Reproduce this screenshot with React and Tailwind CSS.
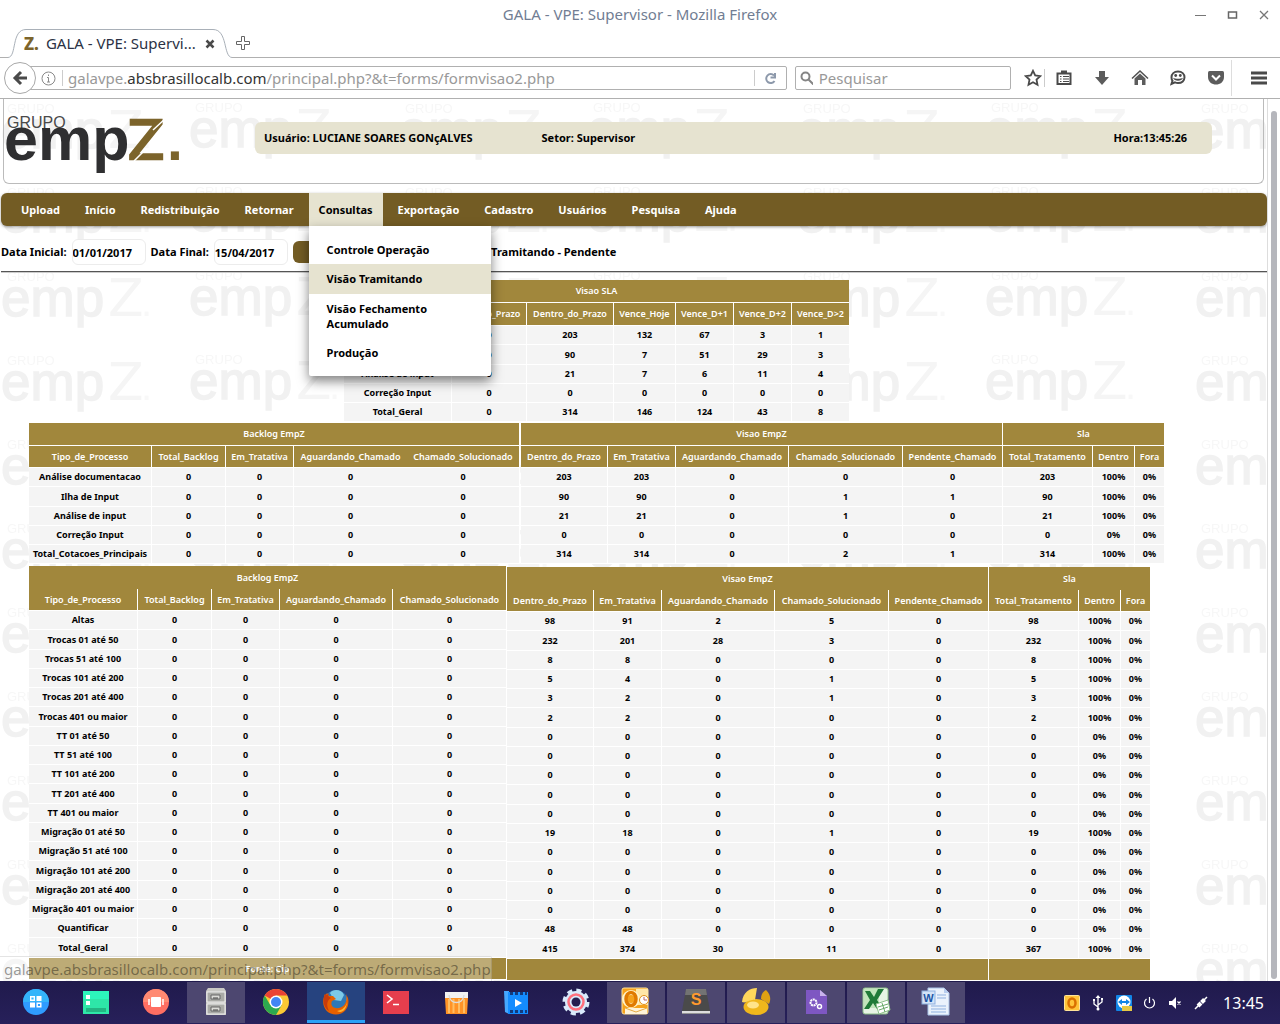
import React from "react";

const HEAD = "border-white bg-[#a1873c] text-white";

const LEFT_COLUMNS = ["Tipo_de_Processo", "Total_Backlog", "Em_Tratativa", "Aguardando_Chamado", "Chamado_Solucionado"];
const RIGHT_COLUMNS = [
  "Dentro_do_Prazo",
  "Em_Tratativa",
  "Aguardando_Chamado",
  "Chamado_Solucionado",
  "Pendente_Chamado",
  "Total_Tratamento",
  "Dentro",
  "Fora",
];
const RIGHT_WIDTHS = ["w-[87px]", "w-[68px]", "w-[113px]", "w-[114px]", "w-[100px]", "w-[90px]", "w-[42px]", "w-[29px]"];
const RIGHT_GROUPS = [
  { label: "Visao EmpZ", span: 5 },
  { label: "Sla", span: 3 },
];

const SLA_ROWS = [
  ["Análise documentacao", 0, 203, 132, 67, 3, 1],
  ["Ilha de Input", 0, 90, 7, 51, 29, 3],
  ["Análise de input", 0, 21, 7, 6, 11, 4],
  ["Correção Input", 0, 0, 0, 0, 0, 0],
  ["Total_Geral", 0, 314, 146, 124, 43, 8],
];

const MAIN_NAMES = ["Análise documentacao", "Ilha de Input", "Análise de input", "Correção Input", "Total_Cotacoes_Principais"];
const MAIN_ROWS = [
  [203, 203, 0, 0, 0, 203, "100%", "0%"],
  [90, 90, 0, 1, 1, 90, "100%", "0%"],
  [21, 21, 0, 1, 0, 21, "100%", "0%"],
  [0, 0, 0, 0, 0, 0, "0%", "0%"],
  [314, 314, 0, 2, 1, 314, "100%", "0%"],
];

const OTHER_NAMES = [
  "Altas",
  "Trocas 01 até 50",
  "Trocas 51 até 100",
  "Trocas 101 até 200",
  "Trocas 201 até 400",
  "Trocas 401 ou maior",
  "TT 01 até 50",
  "TT 51 até 100",
  "TT 101 até 200",
  "TT 201 até 400",
  "TT 401 ou maior",
  "Migração 01 até 50",
  "Migração 51 até 100",
  "Migração 101 até 200",
  "Migração 201 até 400",
  "Migração 401 ou maior",
  "Quantificar",
  "Total_Geral",
];
const EMPTY = [0, 0, 0, 0, 0, 0, "0%", "0%"];
const OTHER_ROWS = [
  [98, 91, 2, 5, 0, 98, "100%", "0%"],
  [232, 201, 28, 3, 0, 232, "100%", "0%"],
  [8, 8, 0, 0, 0, 8, "100%", "0%"],
  [5, 4, 0, 1, 0, 5, "100%", "0%"],
  [3, 2, 0, 1, 0, 3, "100%", "0%"],
  [2, 2, 0, 0, 0, 2, "100%", "0%"],
  EMPTY,
  EMPTY,
  EMPTY,
  EMPTY,
  EMPTY,
  [19, 18, 0, 1, 0, 19, "100%", "0%"],
  EMPTY,
  EMPTY,
  EMPTY,
  EMPTY,
  [48, 48, 0, 0, 0, 0, "0%", "0%"],
  [415, 374, 30, 11, 0, 367, "100%", "0%"],
];

const backlog = (names) => names.map((name) => [name, 0, 0, 0, 0]);

function DataTable({ groups, columns, widths, rows, footer, ruled = true, openRight = false, endBorder = false, headHeight = "h-[22px]" }) {
  const line = (i, count) => (i < count - 1 || endBorder ? " border-r" : "");
  return (
    <table className="table-fixed border-separate border-spacing-0 text-center text-[9px] leading-[12px] font-bold whitespace-nowrap text-black">
      <colgroup>
        {widths.map((w, i) => (
          <col key={i} className={w} />
        ))}
      </colgroup>
      <thead>
        <tr className="h-[23px]">
          {groups.map((g, i) => (
            <th key={i} colSpan={g.span} className={HEAD + " p-0 font-semibold" + (ruled ? " border-b" : "") + line(i, groups.length)}>
              {g.label}
            </th>
          ))}
        </tr>
        <tr className={headHeight}>
          {columns.map((c, i) => (
            <th
              key={c}
              className={HEAD + " border-b p-0 font-semibold" + (openRight && i === columns.length - 2 ? "" : line(i, columns.length))}
            >
              {c}
            </th>
          ))}
        </tr>
      </thead>
      <tbody>
        {rows.map((row, r) => (
          <tr key={r} className="h-[19px] nth-[4n+2]:h-[20px]">
            {row.map((cell, i) => (
              <td
                key={i}
                className={
                  "border-b border-white bg-[#f4f4f4] p-0" +
                  (openRight && i === row.length - 2 ? "" : line(i, row.length))
                }
              >
                {cell}
              </td>
            ))}
          </tr>
        ))}
      </tbody>
      {footer && (
        <tfoot>
          <tr className="h-[22px]">
            {footer.map((f, i) => (
              <td key={i} colSpan={f.span} className={HEAD + " border-b p-0 font-semibold" + line(i, footer.length)}>
                {f.label}
              </td>
            ))}
          </tr>
        </tfoot>
      )}
    </table>
  );
}

function Watermark() {
  return (
    <svg className="absolute inset-0 h-full w-full font-normal" aria-hidden="true">
      <defs>
        <g id="mark" fill="#f1f1f1" fontFamily="Liberation Sans, sans-serif">
          <text x="6" y="11" fontSize="13" fill="#f7f7f7">GRUPO</text>
          <text x="0" y="46" fontSize="53" stroke="#f1f1f1" strokeWidth="1.500">emp</text>
          <text x="107" y="46" fontSize="52" fontFamily="DejaVu Sans, sans-serif" fill="#f5f5f5">Z</text>
          <text x="140" y="46" fontSize="40" fill="#f8f8f8">.</text>
        </g>
        <pattern id="marks" width="398" height="84" patternUnits="userSpaceOnUse" y="-9">
          <use href="#mark" x="1" y="12" />
          <use href="#mark" x="189" y="11" />
        </pattern>
      </defs>
      <rect width="100%" height="100%" fill="url(#marks)" />
    </svg>
  );
}

function Logo() {
  return (
    <svg width="186" height="78" viewBox="0 -8 186 78" className="font-normal" role="img" aria-label="Grupo empZ">
      <g fontFamily="Liberation Sans, sans-serif">
        <text x="3" y="17" fontSize="16" fill="#4a4a4a">GRUPO</text>
        <text x="0" y="49" fontSize="61" fontWeight="700" fill="#2f2f31">emp</text>
        <text x="124" y="48" fontSize="53" fontFamily="DejaVu Sans, sans-serif" fill="#7c642b" stroke="#7c642b" strokeWidth="2.500">Z</text>
        <text x="163" y="49" fontSize="57" fontWeight="700" fill="#7c642b">.</text>
      </g>
      <path d="M149 19l13-12M130 50l11-11" stroke="#fff" strokeWidth="1.500" />
    </svg>
  );
}

function TabStrip() {
  return (
    <div className="flex h-[29px] items-stretch">
      <div className="w-2 border-b border-[#b0b0b0]" />
      <div className="relative flex w-[224px] items-center pl-4">
        <svg className="absolute top-0 left-0" width="224" height="29" fill="none">
          <path d="M0 28.500C9 28 3 .5 18 .5H205C220 .5 215 28 224 28.500" stroke="#a9b0b8" />
        </svg>
        <span className="text-[17px] leading-none font-extrabold text-[#7c642b]">Z.</span>
        <span className="ml-[7px] text-[15px] text-[#2b3245]">GALA - VPE: Supervi...</span>
        <button aria-label="Fechar aba" className="mr-[17px] ml-auto">
          <svg width="10" height="10" stroke="#4a4a4a" strokeWidth="2.500"><path d="M1.500 1.500l7 7M8.500 1.500l-7 7" /></svg>
        </button>
      </div>
      <div className="flex flex-1 items-center border-b border-[#b0b0b0] pl-1">
        <button aria-label="Nova aba">
          <svg width="15" height="15" fill="#fff" stroke="#666"><path d="M5.500 .5h3v5h5v3h-5v5h-3v-5h-5v-3h5z" /></svg>
        </button>
      </div>
    </div>
  );
}

function ToolButton({ label, children }) {
  return (
    <button aria-label={label} className="flex w-[38px] justify-center">
      <svg width="18" height="18" viewBox="0 0 18 18" fill="none">{children}</svg>
    </button>
  );
}

function Toolbar() {
  return (
    <div className="flex h-[41px] items-center border-b border-[#b0b0b0] pl-1">
      <button aria-label="Voltar" className="relative flex size-8 items-center justify-center rounded-full border border-[#a8a8a8] bg-white">
        <svg width="16" height="16" fill="none" stroke="#4a4a4a" strokeWidth="3"><path d="M15 8H3M9 2L3 8l6 6" /></svg>
      </button>
      <div className="-ml-2 flex h-6 flex-1 items-center rounded-r-xs border border-[#b0b0b0] pl-3">
        <svg width="15" height="15" fill="none" stroke="#8a8a8a"><circle cx="7.500" cy="7.500" r="6.500" /><path d="M7.500 6.500V11M6 11h3M6 6.500h1.500M7.500 3.500v1.500" /></svg>
        <span className="ml-1.5 h-4 w-px bg-[#ccc]" />
        <div role="textbox" aria-label="Endereço" className="ml-[5px] flex-1 text-[15px] leading-5 whitespace-nowrap text-[#999]">
          galavpe.<span className="text-[#333]">absbrasillocalb.com</span>/principal.php?&amp;t=forms/formvisao2.php
        </div>
        <button aria-label="Recarregar" className="flex h-4 w-8 items-center justify-center border-l border-[#ccc]">
          <svg width="13" height="13" fill="none" stroke="#8d99ab" strokeWidth="2"><path d="M10 3.500A4.500 4.500 0 1 0 10.500 9M6.500 5.500H11V1" /></svg>
        </button>
      </div>
      <label className="ml-2 flex h-6 w-[216px] items-center rounded-xs border border-[#b0b0b0] pl-1">
        <svg width="14" height="14" fill="none" stroke="#858585" strokeWidth="2"><circle cx="5.500" cy="5.500" r="4" /><path d="M8.500 8.500l5 5" /></svg>
        <input aria-label="Pesquisar" placeholder="Pesquisar" className="ml-1.5 w-full text-[15px] leading-5 outline-none placeholder:text-[#999]" />
      </label>
      <div className="ml-[13px] flex w-5">
        <button aria-label="Favoritos">
          <svg width="18" height="18" fill="none" stroke="#4a4a4a" strokeWidth="1.800"><path d="M9 1.800l2.200 4.700 5 .6-3.700 3.500 1 5.100L9 13.200l-4.500 2.500 1-5.100L1.800 7.100l5-.6z" /></svg>
        </button>
      </div>
      <span className="h-[18px] w-px bg-[#ccc]" />
      <ToolButton label="Lista">
        <path d="M2.500 4.500h13v10.500h-13z" stroke="#4a4a4a" strokeWidth="2" />
        <path d="M6 1.500h6v3H6z" fill="#4a4a4a" />
        <path d="M5 7.500h1.500M5 10h1.500M5 12.500h1.500M8 7.500h6M8 10h6M8 12.500h6" stroke="#4a4a4a" />
      </ToolButton>
      <ToolButton label="Downloads">
        <path d="M6 2h6v6h4l-7 8-7-8h4z" fill="#5c5c5c" />
      </ToolButton>
      <ToolButton label="Início">
        <path d="M1 9.500l8-7.500 8 7.500" stroke="#4f4f4f" strokeWidth="1.500" />
        <path d="M3.500 9.500L9 4.500l5.500 5V16H11v-5H7v5H3.500z" fill="#5c5c5c" />
      </ToolButton>
      <ToolButton label="Conversa">
        <path d="M9 2.500c4 0 6.500 2.500 6.500 5.800S13 14 9 14c-1 0-2-.2-3-.6L2.500 15l1-3.200C2.500 10.800 2.500 9.500 2.500 8.300 2.500 5 5 2.500 9 2.500z" stroke="#4a4a4a" strokeWidth="2" />
        <path d="M4 8.800c2.500 1.400 7.500 1.400 10 0-1 4-9 4-10 0" fill="#4a4a4a" />
        <circle cx="6.700" cy="6.500" r="1.400" fill="#4a4a4a" /><circle cx="11.300" cy="6.500" r="1.400" fill="#4a4a4a" />
      </ToolButton>
      <ToolButton label="Pocket">
        <path d="M1 3.500Q1 2 2.500 2h13Q17 2 17 3.500V8c0 10-16 10-16 0z" fill="#5c5c5c" />
        <path d="M5 6.500l4 4 4-4" stroke="#fff" strokeWidth="2" />
      </ToolButton>
      <span className="-ml-1 h-9 w-px bg-[#ddd]" />
      <button aria-label="Menu" className="mr-[13px] ml-[19px]">
        <svg width="16" height="14" stroke="#4a4a4a" strokeWidth="3"><path d="M0 2h16M0 7h16M0 12h16" /></svg>
      </button>
    </div>
  );
}

const CONSULTAS = ["Controle Operação", "Visão Tramitando", "Visão Fechamento Acumulado", "Produção"];
const MENU = ["Upload", "Início", "Redistribuição", "Retornar", "Consultas", "Exportação", "Cadastro", "Usuários", "Pesquisa", "Ajuda"];

function Nav() {
  return (
    <nav className="relative z-10 mt-[9px] ml-px rounded-md bg-[#735c24] pl-2.5 shadow-[0_1px_3px_rgba(0,0,0,0.4)]">
      <ul className="flex gap-[5px]">
        {MENU.map((item) =>
          item === "Consultas" ? (
            <li key={item} className="relative">
              <a href="#consultas" className="block bg-[#e6e3d0] px-2.5 leading-[33px] text-black">{item}</a>
              <ul className="absolute top-full left-0 w-[182px] rounded-b-xs bg-white py-[9px] leading-[15px] text-black shadow-[0_5px_12px_rgba(0,0,0,0.5)]">
                {CONSULTAS.map((sub) => (
                  <li key={sub}>
                    <a href="#visao" className={"block pt-[7px] pr-10 pl-[18px] " + (sub === "Visão Tramitando" ? "bg-[#e6e3d0] pb-2" : "pb-[7px]")}>{sub}</a>
                  </li>
                ))}
              </ul>
            </li>
          ) : (
            <li key={item}>
              <a href="#menu" className="block px-2.5 leading-[33px] text-white">{item}</a>
            </li>
          )
        )}
      </ul>
    </nav>
  );
}

function DateField({ label, id, value }) {
  return (
    <>
      <label htmlFor={id}>{label}</label>
      <input id={id} defaultValue={value} className="mr-[5px] ml-[5px] h-[26px] w-[74px] rounded-md border border-[#ececec] bg-white" />
    </>
  );
}

function Page() {
  return (
    <main className="relative h-0 min-w-0 flex-1 overflow-hidden text-[11px] font-bold text-black">
      <Watermark />
      <div className="relative">
        <header className="mr-[3px] ml-[3px] flex h-[85px] rounded-b-md border border-t-0 border-[#bbb]">
          <div className="pt-1"><Logo /></div>
          <div className="mt-[23px] mr-[51px] ml-[65px] flex h-8 flex-1 items-center rounded-md bg-[#e6e3d0] pr-[25px] pl-[9px]">
            <span>Usuário: LUCIANE SOARES GONçALVES</span>
            <span className="ml-[69px]">Setor: Supervisor</span>
            <span className="ml-auto">Hora:13:45:26</span>
          </div>
        </header>
        <Nav />
        <form className="ml-px flex h-[46px] items-center border-b border-[#555] pt-[7px] shadow-[0_1px_0_#ccc]" onSubmit={(e) => e.preventDefault()}>
          <DateField id="inicio" label="Data Inicial:" value="01/01/2017" />
          <DateField id="fim" label="Data Final:" value="15/04/2017" />
          <button aria-label="Pesquisar período" className="h-[22px] w-[80px] rounded-md bg-[#735c24]" />
          <h1 className="ml-[86px]">Visão Tramitando - Pendente</h1>
        </form>
        <div className="mt-2 ml-[29px] w-fit">
          <div className="mx-auto w-fit">
            <DataTable
              groups={[{ label: "Visao SLA", span: 7 }]}
              columns={["Tipo_de_Processo", "Fora_do_Prazo", "Dentro_do_Prazo", "Vence_Hoje", "Vence_D+1", "Vence_D+2", "Vence_D>2"]}
              widths={["w-[108px]", "w-[75px]", "w-[87px]", "w-[62px]", "w-[58px]", "w-[58px]", "w-[57px]"]}
              rows={SLA_ROWS}
              headHeight="h-[23px]"
            />
          </div>
          <div className="mt-px flex gap-px">
            <DataTable
              groups={[{ label: "Backlog EmpZ", span: 5 }]}
              columns={LEFT_COLUMNS}
              widths={["w-[123px]", "w-[74px]", "w-[68px]", "w-[113px]", "w-[113px]"]}
              rows={backlog(MAIN_NAMES)}
              openRight
              endBorder
            />
            <DataTable groups={RIGHT_GROUPS} columns={RIGHT_COLUMNS} widths={RIGHT_WIDTHS} rows={MAIN_ROWS} />
          </div>
          <div className="mt-0.5 flex items-start">
            <DataTable
              groups={[{ label: "Backlog EmpZ", span: 5 }]}
              columns={LEFT_COLUMNS}
              widths={["w-[109px]", "w-[74px]", "w-[68px]", "w-[113px]", "w-[114px]"]}
              rows={backlog(OTHER_NAMES)}
              footer={[{ label: "Fonte: Cip", span: 5 }]}
              ruled={false}
              endBorder
            />
            <div className="mt-px">
              <DataTable
                groups={RIGHT_GROUPS}
                columns={RIGHT_COLUMNS}
                widths={RIGHT_WIDTHS}
                rows={OTHER_ROWS}
                footer={[{ label: "", span: 5 }, { label: "", span: 3 }]}
                ruled={false}
              />
            </div>
          </div>
        </div>
      </div>
      <div className="absolute bottom-0 left-0 rounded-tr-xs border-t border-r border-black/10 bg-white/30 pl-1 text-[15px] leading-6 font-normal text-black/40">
        galavpe.absbrasillocalb.com/principal.php?&amp;t=forms/formvisao2.php
      </div>
    </main>
  );
}

const APPS = [
  { name: "Menu", art: <><circle cx="15" cy="15" r="13" fill="#2f9cff" /><path d="M2 15a13 13 0 0 1 26 0z" fill="#34b5fa" /><path d="M15.500 9h5v5h-5zM9 15.500h5v5H9z" fill="#fff" /><path d="M9.700 9.700h3.600v3.600H9.700zM16.200 16.200h3.600v3.600h-3.600z" fill="none" stroke="#fff" strokeWidth="1.400" /></> },
  { name: "Painel", art: <><path d="M2 4h26v23H2z" fill="#2ee6a8" /><path d="M2 4h26v8H2z" fill="#2df5bb" /><path d="M5 21h20v4H5z" fill="#23b583" /><path d="M5 8h4v4H5zM5 14h4v4H5z" fill="#fff" /></> },
  { name: "Visão geral", art: <><circle cx="15" cy="15" r="13" fill="#ff6e62" /><path d="M2 15a13 13 0 0 1 26 0z" fill="#ff8a72" /><rect x="10" y="10" width="10" height="10" rx="1" fill="#fff" /><path d="M8 12v6M22 12v6" stroke="#fff" strokeWidth="1.500" /></> },
  { name: "Arquivos", open: true, art: <><path d="M7 1h16l2 3v24H5V4z" fill="#c9c9c5" /><path d="M6 5h18v10H6zM6 17h18v10H6z" fill="#a9aaa6" stroke="#eee" /><path d="M10 8h9v4h-9zM10 20h9v4h-9z" fill="#dcdcd8" stroke="#666" /><path d="M12 11h5M12 23h5" stroke="#444" /></> },
  { name: "Chrome", art: <><circle cx="15" cy="15" r="13" fill="#fcc934" /><path d="M15 15L3.700 8.500A13 13 0 0 1 26.300 8.500H15z" fill="#ea4335" /><path d="M3.700 8.500A13 13 0 0 0 15 28l5.600-9.800L15 15l-5.600 3.200z" fill="#2da94f" /><circle cx="15" cy="15" r="6.500" fill="#fff" /><circle cx="15" cy="15" r="5" fill="#4285f4" /></> },
  { name: "Firefox", active: true, art: <><circle cx="15" cy="14.500" r="11.500" fill="#2f78b7" /><path d="M9 6c4-5 12-3 14 2l-3 6-7-1z" fill="#7cc9e8" /><path d="M4 7c-5 11 1 20.500 11 20.500 9 0 14-8 12-16.500l-2-4c2 8-2 13-7 14-6 1-9-3-7-7l4-2-3-3-4 0-2-3-2 3z" fill="#e66000" /><path d="M4 7c-3 7-1 14 4 17-3-6-2-11 2-13l-3-2 1-3-2 2z" fill="#c73b0b" /><path d="M25 8c3 8-1 15-9 16 7 4 12-5 9-16z" fill="#ffb52e" /></> },
  { name: "Terminal", art: <><path d="M2 4h26v23H2z" fill="#e63e4d" /><path d="M6 8l5 4-5 4M12 17.500h6" fill="none" stroke="#fff" strokeWidth="1.600" /></> },
  { name: "Loja", art: <><path d="M4 11h23l-1 16H5z" fill="#ff9326" /><path d="M4 5h23v6H4z" fill="#f2f2f2" /><path d="M8 12v14M12.500 12v14M18 12v14M23 12v14" stroke="#ffbd62" strokeWidth="2" /><path d="M8 8c1 10 14 10 15 0" fill="none" stroke="#ddd" strokeWidth="1.500" /></> },
  { name: "Vídeo", art: <><path d="M3 4h5v23l-4-2z" fill="#46a8ff" /><path d="M7 5h20v22H7z" fill="#148cff" /><path d="M9 6.500h17M9 24.500h17" stroke="#123a7c" strokeWidth="3" strokeDasharray="3 2" /><path d="M14 12l7 4-7 4z" fill="#fff" /></> },
  { name: "Configurações", art: <><circle cx="15" cy="15" r="11" fill="#d9eafb" /><circle cx="15" cy="15" r="11.500" fill="none" stroke="#d9eafb" strokeWidth="4" strokeDasharray="5 4.030" /><circle cx="15" cy="15" r="7.500" fill="none" stroke="#ff6f7d" strokeWidth="2.500" /><circle cx="15" cy="15" r="4.500" fill="#241d4f" /></> },
  { name: "Outlook", open: true, art: <><rect x="1" y="1" width="26" height="26" rx="2" fill="#f6a21b" stroke="#ffe39a" /><path d="M15 2h12v16H15z" fill="#ffe7a8" /><circle cx="10" cy="12" r="6.500" fill="none" stroke="#fff3c8" strokeWidth="5" /><ellipse cx="10" cy="12" rx="5" ry="6.500" fill="none" stroke="#e07a00" strokeWidth="3.500" /><circle cx="23" cy="13" r="4.500" fill="#fff" stroke="#e2901a" /><path d="M23 10v3h3" fill="none" stroke="#b66" /><path d="M4 21h22v6H4z" fill="#fff3d8" /><path d="M4 21l11 4 11-4" fill="none" stroke="#e5aa42" /></> },
  { name: "Sublime Text", open: true, art: <><path d="M5 2h20l4 22v3H1v-3z" fill="#4a4a4a" /><path d="M1 24h28v2.500H1z" fill="#ddd" /><path d="M5 2h20l1 6H4z" fill="#737373" /><text x="15" y="18" textAnchor="middle" fontSize="16" fontWeight="800" fontFamily="Liberation Sans, sans-serif" fill="#ff9a2e">S</text></> },
  { name: "Colibri", open: true, art: <><ellipse cx="15" cy="20" rx="12.500" ry="8" fill="#f0b71c" /><path d="M1 15C2 5 9 1 16 1l-2 12c-5-1-9 4-13 2z" fill="#ffd75b" /><path d="M20 12c0-5 2-7 5-9 5 5 5 10 3 14z" fill="#dfa113" /><ellipse cx="12" cy="18" rx="6" ry="3.500" fill="#ffe48a" /></> },
  { name: "Biblioteca", open: true, art: <><path d="M5 3h14l7 6v18H5z" fill="#7e57c2" /><path d="M19 3l7 6h-7z" fill="#c8b3ec" /><circle cx="12.500" cy="15.500" r="3" fill="none" stroke="#fff" strokeWidth="2" strokeDasharray="2 .6" /><circle cx="18.500" cy="19.500" r="2" fill="none" stroke="#fff" strokeWidth="1.500" /></> },
  { name: "Excel", open: true, art: <><rect x="2" y="1" width="25" height="26" rx="2" fill="#e7f4e4" stroke="#8cc088" /><path d="M3 2h15v19H3z" fill="#c2e5bb" /><path d="M4 4h5l4 6 4-8h6l-7 11 6 9h-6l-4-6-4 6H3l6-9z" fill="#207a38" /><path d="M15 17l12-4 2 10-11 4z" fill="#fff" stroke="#8cc088" /><path d="M17 20l10-3M18 23l9-3M21 16l3 9" stroke="#6bab6b" /></> },
  { name: "Word", open: true, art: <><path d="M7 1h16l5 5v22H7z" fill="#eaf2fc" stroke="#a9c3e6" /><path d="M23 1v5h5z" fill="#b7cdee" /><path d="M16 8h9M16 11h9M10 19h15M10 22h15M10 25h15" stroke="#8fb1e0" /><rect x="1" y="4" width="13" height="13" fill="#d4e3f7" stroke="#8fb1e0" /><text x="7.500" y="14.500" textAnchor="middle" fontSize="11" fontWeight="700" fontFamily="Liberation Sans, sans-serif" fill="#1d55a5">W</text></> },
];

function Taskbar() {
  return (
    <footer className="flex h-[43px] items-center bg-gradient-to-b from-[#201a4c] to-[#27205a] pl-[7px] text-white">
      {APPS.map((app) => (
        <button
          key={app.name}
          aria-label={app.name}
          className={
            "mr-0.5 flex h-[41px] w-[58px] items-center justify-center border-b-[3px] pt-0.5 " +
            (app.active ? "border-[#2ba2f7] bg-[#26437f]" : app.open ? "border-[#4d4770] bg-[#4d4770]" : "border-transparent")
          }
        >
          <svg width="30" height="30" viewBox="0 0 30 30">{app.art}</svg>
        </button>
      ))}
      <div className="mr-4 ml-auto flex items-center gap-2.5">
        <svg width="16" height="16"><rect x=".5" y=".5" width="15" height="15" rx="1" fill="#ffc43a" stroke="#ffe39a" /><ellipse cx="8" cy="8" rx="3.500" ry="4.500" fill="none" stroke="#d96f00" strokeWidth="2.500" /></svg>
        <svg width="16" height="16" fill="none" stroke="#fff" strokeWidth="1.300"><path d="M8 1v13M8 12L4 9V5M8 10l4-3V4" /><circle cx="8" cy="14" r="1.500" fill="#fff" stroke="none" /><path d="M8 0l2.500 3h-5z" fill="#fff" stroke="none" /><path d="M3 4h2v2H3zM11 3h2v2h-2z" fill="#fff" stroke="none" /></svg>
        <svg width="16" height="16"><rect width="16" height="16" rx="1" fill="#1186e8" /><circle cx="8" cy="7" r="6.500" fill="#fff" /><path d="M2 7l4-3v2h4V4l4 3-4 3V8H6v2z" fill="#1186e8" /><path d="M6 11h10v5H6z" fill="#e6c944" /></svg>
        <svg width="15" height="16" fill="none" stroke="#fff" strokeWidth="1.200"><path d="M7.500 2v6M4.500 4a5 5 0 1 0 6 0" /></svg>
        <svg width="16" height="16"><path d="M2 6h3l4-4v12l-4-4H2z" fill="#fff" /><path d="M10.500 6.500l3 3M13.500 6.500l-3 3" stroke="#fff" strokeWidth="1.200" /></svg>
        <svg width="16" height="16" stroke="#fff"><path d="M2 14l5-5M9 7l5-5" strokeWidth="1.500" /><path d="M5 11l3-3M8.500 7.500l3-3" strokeWidth="4" /></svg>
        <span className="ml-1 text-[16px]">13:45</span>
      </div>
    </footer>
  );
}

export default function App() {
  return (
    <div className="flex h-screen flex-col overflow-hidden bg-white font-['Noto_Sans',sans-serif]">
      <div className="flex h-[29px] items-center">
        <span className="w-20" />
        <span className="flex-1 text-center text-[15px] text-[#717d93]">GALA - VPE: Supervisor - Mozilla Firefox</span>
        <div className="flex w-20 items-center justify-end gap-[21px] pr-[11px]">
          <button aria-label="Minimizar"><svg width="11" height="10" stroke="#777"><path d="M0 5.500h11" /></svg></button>
          <button aria-label="Maximizar"><svg width="11" height="10" fill="none" stroke="#666" strokeWidth="1.500"><path d="M1.500 2h8v6h-8z" /></svg></button>
          <button aria-label="Fechar"><svg width="10" height="10" stroke="#777" strokeWidth="1.300"><path d="M1 1l8 8M9 1L1 9" /></svg></button>
        </div>
      </div>
      <TabStrip />
      <Toolbar />
      <div className="flex flex-1">
        <div className="flex min-w-0 flex-1 flex-col"><Page /></div>
        <div className="flex w-[13px] justify-center border-l border-[#ddd] pt-3 pb-0.5">
          <div className="w-1.5 rounded-full bg-[#b5b6bc]" />
        </div>
      </div>
      <Taskbar />
    </div>
  );
}
